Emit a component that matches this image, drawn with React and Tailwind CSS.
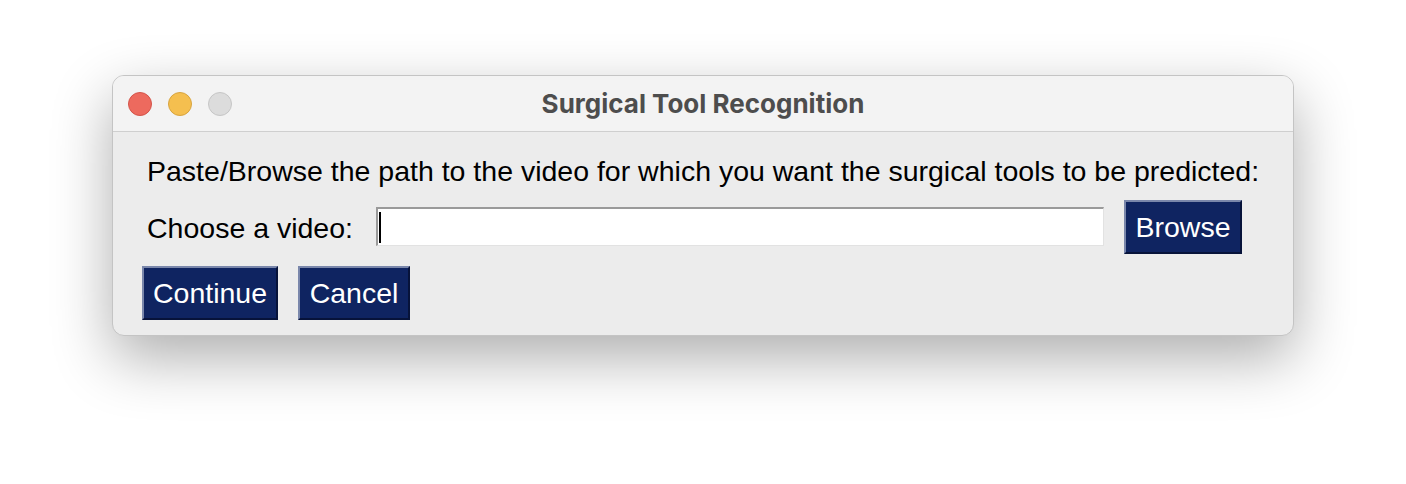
export default function App() {
  const font = { fontFamily: '"Liberation Sans", Arial, sans-serif' };
  const btn =
    "h-[54px] bg-[#0f2461] text-white text-[28.5px] leading-none border-2 border-t-[#7a87ab] border-l-[#7a87ab] border-r-[#07133a] border-b-[#07133a] flex items-center justify-center";

  return (
    <div className="w-[1406px] h-[484px] bg-white flex justify-center pt-[75px]">
      <div
        className="w-[1182px] h-[261px] rounded-[12px] border border-[#c4c4c4] bg-[#ececec] overflow-hidden shadow-[0_22px_60px_rgba(0,0,0,0.32)] flex flex-col"
        style={font}
      >
        <div className="h-[56px] shrink-0 bg-[#f3f3f3] border-b border-[#cfcfcf] grid grid-cols-[1fr_auto_1fr] items-center">
          <div className="flex items-center gap-[16px] pl-[15px]">
            <span className="w-[24px] h-[24px] rounded-full bg-[#ed6a5e] border border-[#d4544a]" />
            <span className="w-[24px] h-[24px] rounded-full bg-[#f5bf4f] border border-[#d8a43f]" />
            <span className="w-[24px] h-[24px] rounded-full bg-[#dcdcdc] border border-[#c6c6c6]" />
          </div>
          <div
            className="text-[26px] font-bold text-[#4d4d4d]"
            style={{ fontFamily: 'Inter, "Liberation Sans", sans-serif' }}
          >
            Surgical Tool Recognition
          </div>
          <div />
        </div>

        <div className="flex flex-col pl-[29px] pt-[23px]">
          <div className="pl-[5px] text-[28.5px] leading-[33px] text-black">
            Paste/Browse the path to the video for which you want the surgical tools to be predicted:
          </div>

          <div className="flex items-center mt-[12px]">
            <div className="pl-[5px] w-[234px] text-[28.5px] leading-[33px] text-black pt-[3px]">Choose a video:</div>
            <div className="w-[728px] h-[39px] -mt-[1px] bg-white border-t-2 border-l-2 border-t-[#9a9a9a] border-l-[#9a9a9a] border-r border-b border-r-[#e2e2e2] border-b-[#e2e2e2] flex items-center pl-[1px]">
              <span className="w-[2px] h-[31px] bg-black" />
            </div>
            <div className={btn + " w-[118px] ml-[20px]"}>Browse</div>
          </div>

          <div className="flex items-center gap-[20px] mt-[12px]">
            <div className={btn + " w-[136px]"}>Continue</div>
            <div className={btn + " w-[112px]"}>Cancel</div>
          </div>
        </div>
      </div>
    </div>
  );
}
